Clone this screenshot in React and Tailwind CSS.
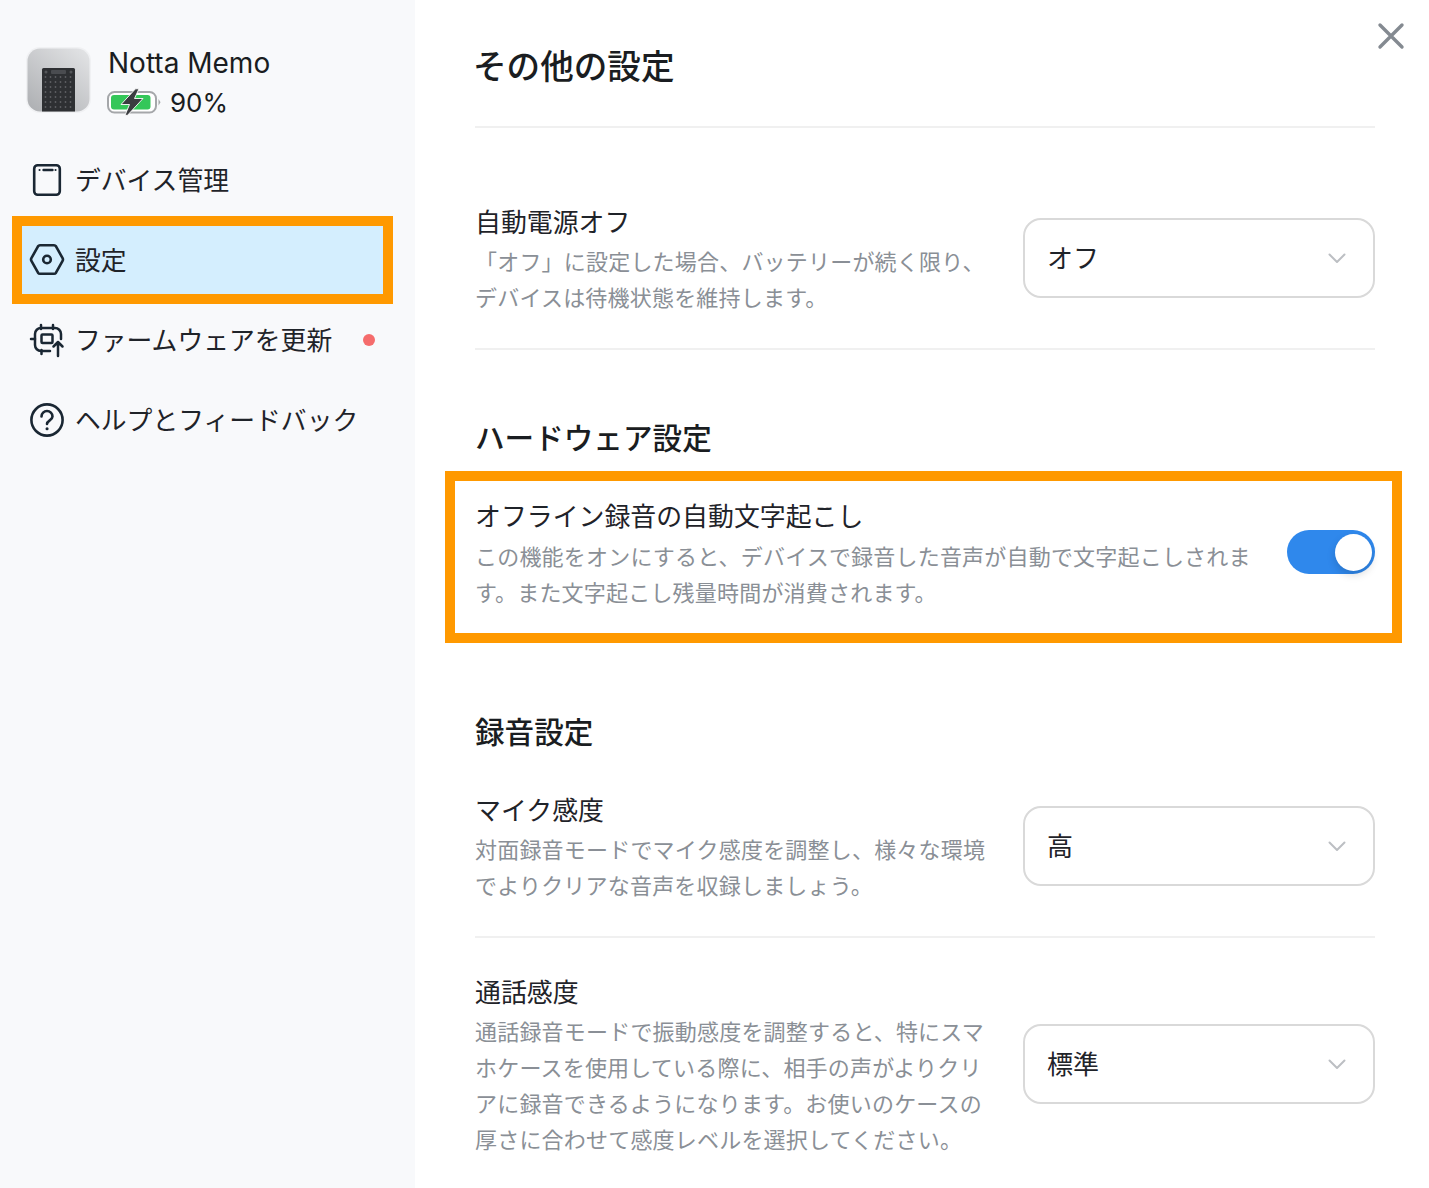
import React from "react";

const font = { fontFamily: '"Inter", "Noto Sans CJK JP", sans-serif' };

function DeviceThumb() {
  const dots = [];
  for (let r = 0; r < 7; r++) for (let c = 0; c < 6; c++) dots.push(<circle key={`${r}-${c}`} cx={19.5 + c * 5} cy={30 + r * 5} r="0.9" fill="#5e6063" />);
  return (
    <svg width="65" height="66" viewBox="0 0 65 66" className="shrink-0">
      <defs>
        <linearGradient id="thumb" x1="0.9" y1="0" x2="0.1" y2="1">
          <stop offset="0" stopColor="#e2e3e5" />
          <stop offset="1" stopColor="#aeb0b3" />
        </linearGradient>
        <clipPath id="clipThumb"><rect x="1.5" y="1.5" width="62" height="63" rx="12.5" /></clipPath>
      </defs>
      <rect x="0" y="0" width="65" height="66" rx="14" fill="#f0f1f3" />
      <g clipPath="url(#clipThumb)">
        <rect x="1" y="1" width="63" height="64" fill="url(#thumb)" />
        <rect x="16" y="21" width="33" height="46" rx="1.5" fill="#2e3033" />
        <rect x="25" y="23" width="15" height="4" rx="1" fill="#4a4c50" />
        <circle cx="20" cy="25" r="1.5" fill="#55575a" />
        <circle cx="45" cy="25" r="1.5" fill="#55575a" />
        {dots}
      </g>
    </svg>
  );
}

function Battery() {
  return (
    <svg width="54" height="28" viewBox="0 0 54 28" className="-ml-px -mt-[2px] shrink-0">
      <rect x="1" y="4" width="48" height="20.5" rx="6.5" fill="#fff" stroke="#a5a7aa" strokeWidth="2" />
      <rect x="4" y="7" width="39.5" height="14.5" rx="3" fill="#34c759" />
      <path d="M51.5 11 L53.5 14.2 L51.5 17.5 Z" fill="#a5a7aa" />
      <path d="M28.5 0.8 H32 L27.5 10.5 H36 L20.5 27.3 H18 L22.5 16.5 H14 Z" fill="#3a3c40" stroke="#fff" strokeWidth="0.9" strokeLinejoin="round" />
    </svg>
  );
}

const iconProps = { width: 36, height: 36, viewBox: "0 0 36 36", fill: "none", stroke: "#1a2733", strokeWidth: 2.6, strokeLinecap: "round", strokeLinejoin: "round", className: "shrink-0" };

function DeviceIcon() {
  return (
    <svg {...iconProps}>
      <rect x="5.2" y="3.2" width="25.6" height="29.6" rx="3.5" />
      <path d="M14.5 8h9" strokeWidth="2.4" />
      <path d="M10.5 8h.1M26.5 8h.1" strokeWidth="2" />
    </svg>
  );
}
function HexIcon() {
  return (
    <svg {...iconProps}>
      <path d="M11 3.2h14a2.4 2.4 0 0 1 2 1.1l6.6 11.9a2.6 2.6 0 0 1 0 2.6L27 30.7a2.4 2.4 0 0 1-2 1.1H11a2.4 2.4 0 0 1-2-1.1L2.4 18.8a2.6 2.6 0 0 1 0-2.6L9 4.3a2.4 2.4 0 0 1 2-1.1z" />
      <circle cx="18" cy="17.5" r="3.8" />
    </svg>
  );
}
function FirmwareIcon() {
  return (
    <svg {...iconProps} strokeWidth={2.5}>
      <path d="M21 29H12a6 6 0 0 1-6-6V12a6 6 0 0 1 6-6h14a6 6 0 0 1 6 6v5" />
      <rect x="12.5" y="12.5" width="11" height="8.5" rx="1" />
      <path d="M12 3v4M24 3v4M2 17h4M12.5 28v4M29 20v14M24.5 24.5 29 20l4.5 4.5" />
    </svg>
  );
}
function HelpIcon() {
  return (
    <svg {...iconProps}>
      <circle cx="18" cy="18" r="15.6" />
      <path d="M12.5 14.5a5.5 5.5 0 0 1 11 0c0 3.8-5.5 3.8-5.5 7.5" />
      <path d="M18 26.8h.1" strokeWidth="3" />
    </svg>
  );
}
function Chevron() {
  return (
    <svg width="18" height="12" viewBox="0 0 18 12" fill="none" stroke="#bcbfc3" strokeWidth="2" strokeLinecap="round" strokeLinejoin="round" className="shrink-0">
      <path d="M1.5 2.5 9 10l7.5-7.5" />
    </svg>
  );
}

function NavItem({ icon, label, active, dot }) {
  return (
    <div className={`flex h-[68px] items-center gap-[10px] pl-[7px] pr-2 text-[25.8px] leading-none text-[#1f2329] ${active ? "bg-[#d4eefe] outline-[10px] outline-solid outline-[#ff9900]" : ""}`}>
      {icon}
      <span className="flex-1 whitespace-nowrap pt-[2px]">{label}</span>
      {dot && <span className="h-3 w-3 rounded-full bg-[#f56c6c]" />}
    </div>
  );
}

function Select({ value }) {
  return (
    <div className="flex h-[80px] w-[352px] shrink-0 items-center justify-between rounded-[18px] border-2 border-[#d9d9d9] pl-[22px] pr-[27px] text-[26px] text-[#1f2329]">
      <span>{value}</span>
      <Chevron />
    </div>
  );
}

function Description({ lines }) {
  return (
    <div className="mt-[1px] text-[22px] leading-[36px] tracking-[0.2px] text-[#8a8f96]">
      {lines.map((l) => <div key={l} className="whitespace-nowrap">{l}</div>)}
    </div>
  );
}

function Setting({ title, lines, value }) {
  return (
    <div className="flex items-center justify-between pb-[32px] pt-[30px]">
      <div className="w-[512px] pt-[3px]">
        <div className="text-[25.9px] leading-[40px] text-[#1f2329]">{title}</div>
        <Description lines={lines} />
      </div>
      <Select value={value} />
    </div>
  );
}

function Toggle() {
  return (
    <div className="mb-[4px] flex h-[44px] w-[88px] shrink-0 items-center justify-end rounded-full bg-[#2f88ec] pr-[3px]">
      <div className="h-[37px] w-[37px] rounded-full bg-white shadow-[0_4px_8px_rgba(0,0,0,0.15)]" />
    </div>
  );
}

export default function App() {
  return (
    <div className="flex h-[1188px] w-[1429px] overflow-hidden bg-white" style={font}>
      <aside className="w-[415px] shrink-0 bg-[#f8f9fb] pl-[22px] pr-[32px] pt-[47px]">
        <div className="ml-[4px] flex items-start gap-[17px]">
          <DeviceThumb />
          <div>
            <div className="text-[28px] leading-[32px] text-[#1a1d21]">Notta Memo</div>
            <div className="mt-[8px] flex items-center gap-[9px] text-[26px] leading-[32px] text-[#1a1d21]">
              <Battery />
              <span>90%</span>
            </div>
          </div>
        </div>
        <nav className="mt-[27px] flex flex-col gap-3">
          <NavItem icon={<DeviceIcon />} label="デバイス管理" />
          <NavItem icon={<HexIcon />} label="設定" active />
          <NavItem icon={<FirmwareIcon />} label="ファームウェアを更新" dot />
          <NavItem icon={<HelpIcon />} label="ヘルプとフィードバック" />
        </nav>
      </aside>
      <main className="relative flex-1 pl-[60px] pr-[54px]">
        <svg width="30" height="30" viewBox="0 0 30 30" fill="none" stroke="#848a91" strokeWidth="3.4" strokeLinecap="round" className="absolute right-[23px] top-[21px]">
          <path d="M4 4l22 22M26 4L4 26" />
        </svg>
        <h1 className="flex h-[128px] items-center border-b-2 border-[#f0f0f0] pt-[8px] text-[33.6px] font-medium text-[#1a1d21]"><span className="-ml-[2px]">その他の設定</span></h1>
        <div className="mt-[42px] border-b-2 border-[#f0f0f0]">
          <Setting title="自動電源オフ" value="オフ" lines={["「オフ」に設定した場合、バッテリーが続く限り、", "デバイスは待機状態を維持します。"]} />
        </div>
        <h2 className="mt-[66px] text-[29.6px] font-medium leading-[44px] text-[#1a1d21]">ハードウェア設定</h2>
        <div className="-ml-[30px] -mr-[27px] mt-[11px] flex h-[172px] items-center justify-between border-[10px] border-[#ff9900] pb-[6px] pl-[20px] pr-[17px]">
          <div>
            <div className="text-[25.9px] leading-[38px] text-[#1f2329]">オフライン録音の自動文字起こし</div>
            <div className="pt-[2px]">
              <Description lines={["この機能をオンにすると、デバイスで録音した音声が自動で文字起こしされま", "す。また文字起こし残量時間が消費されます。"]} />
            </div>
          </div>
          <Toggle />
        </div>
        <h2 className="mt-[67px] text-[29.6px] font-medium leading-[44px] text-[#1a1d21]">録音設定</h2>
        <div className="mt-[4px] border-b-2 border-[#f0f0f0]">
          <Setting title="マイク感度" value="高" lines={["対面録音モードでマイク感度を調整し、様々な環境", "でよりクリアな音声を収録しましょう。"]} />
        </div>
        <div className="mt-[2px]">
          <Setting title="通話感度" value="標準" lines={["通話録音モードで振動感度を調整すると、特にスマ", "ホケースを使用している際に、相手の声がよりクリ", "アに録音できるようになります。お使いのケースの", "厚さに合わせて感度レベルを選択してください。"]} />
        </div>
      </main>
    </div>
  );
}
